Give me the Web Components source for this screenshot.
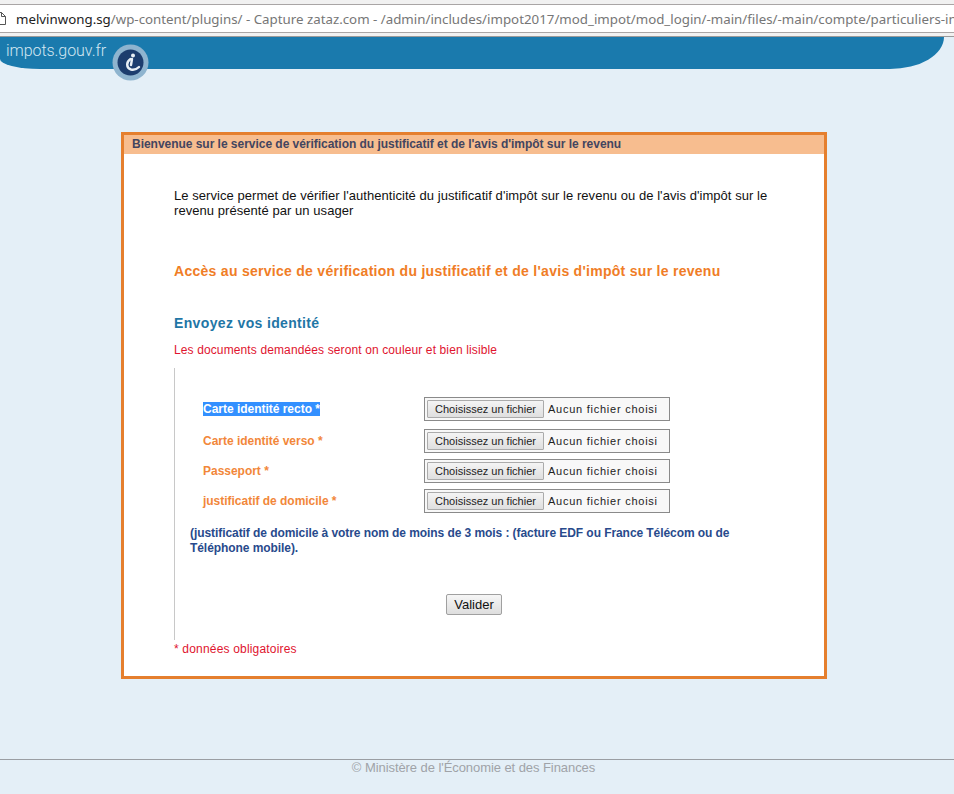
<!DOCTYPE html>
<html lang="fr">
<head>
<meta charset="utf-8">
<title>impots.gouv.fr</title>
<style>
    html, body { margin: 0; padding: 0; height: 794px; overflow: hidden; }
    body { background-color: #e4eff7; font-family: "Liberation Sans", Arial, sans-serif; font-size: 12px; display: flex; flex-direction: column; }
</style>
</head>
<body>
<address-bar></address-bar>
<site-banner></site-banner>
<verify-card title-text="Bienvenue sur le service de vérification du justificatif et de l'avis d'impôt sur le revenu">
    <p slot="lead">Le service permet de vérifier l'authenticité du justificatif d'impôt sur le revenu ou de l'avis d'impôt sur le revenu présenté par un usager</p>
    <file-row selected label="Carte identité recto *"></file-row>
    <file-row label="Carte identité verso *" style="margin-top:8px"></file-row>
    <file-row label="Passeport *" style="margin-top:6px"></file-row>
    <file-row label="justificatif de domicile *" style="margin-top:6px"></file-row>
</verify-card>
<site-footer></site-footer>

<script>
class AddressBar extends HTMLElement {
    constructor() {
        super();
        this.attachShadow({ mode: 'open' });
        this.shadowRoot.innerHTML = `
            <style>
                :host { display: block; height: 37px; background: #f1f1f1; box-sizing: border-box; padding-top: 4px; border-bottom: 1px solid #9a9a9a; flex: none; }
                .field {
                    display: flex; align-items: center; gap: 10px; height: 29px; box-sizing: border-box;
                    background: #fff; border-top: 1px solid #a9a5a5; border-bottom: 1px solid #a9a5a5;
                    font: 13.3px "Noto Sans", sans-serif; color: #767676; white-space: nowrap; overflow: hidden;
                }
                svg { flex: none; margin-left: -1px; }
                b { font-weight: 400; color: #222; }
            </style>
            <div class="field">
                <svg width="7" height="13" viewBox="0 0 7 13"><path d="M-4 .5H2.5L6.5 4.5V12.5H-4M2.5 .5V4.5H6.5" fill="#fff" stroke="#555"/></svg>
                <span><b>melvinwong.sg</b>/wp-content/plugins/ - Capture zataz.com - /admin/includes/impot2017/mod_impot/mod_login/-main/files/-main/compte/particuliers-in</span>
            </div>`;
    }
}

class SiteBanner extends HTMLElement {
    constructor() {
        super();
        this.attachShadow({ mode: 'open' });
        this.shadowRoot.innerHTML = `
            <style>
                :host { display: block; position: relative; height: 32px; width: 944px; flex: none; background: #1a7aad; border-radius: 0 0 54px 40px / 0 0 32px 10px; }
                .name { display: block; padding: 3px 0 0 6px; font: 300 16px/22px Roboto, sans-serif; letter-spacing: -.05px; color: #d3e6f1; }
                .logo { position: absolute; left: 112px; top: 7px; }
            </style>
            <span class="name">impots.gouv.fr</span>
            <svg class="logo" width="37" height="37" viewBox="0 0 37 37">
                <circle cx="18.5" cy="18.5" r="18" fill="#8eb4cf"/>
                <circle cx="18.5" cy="18.5" r="13" fill="#1c3d6e"/>
                <circle cx="21" cy="11.5" r="2" fill="#e8eff5"/>
                <path d="M18.5 15 C14 18 14 24 19 25.5 C22 26.2 25 25 27 23" fill="none" stroke="#e8eff5" stroke-width="2.4" stroke-linecap="round"/>
                <path d="M20 15 L19 21" fill="none" stroke="#e8eff5" stroke-width="2.4" stroke-linecap="round"/>
            </svg>`;
    }
}

class VerifyCard extends HTMLElement {
    constructor() {
        super();
        this.attachShadow({ mode: 'open' });
        const titre = this.getAttribute('title-text');
        this.shadowRoot.innerHTML = `
            <style>
                :host { display: block; box-sizing: border-box; width: 706px; height: 547px; margin: 63px 0 0 121px; border: 3px solid #e57f2e; background: #fff; flex: none; }
                header { height: 19px; background: #f7bd8f; padding-left: 8px; font-weight: bold; line-height: 18px; letter-spacing: -.03px; color: #43455f; }
                .body { padding: 34px 50px 0; }
                ::slotted(p) { margin: 0; font-size: 13px; line-height: 15px; letter-spacing: .055px; color: #111; }
                .lead { width: 600px; }
                h2 { margin: 0; font-size: 14px; line-height: 18px; font-weight: bold; }
                .orange { margin-top: 44px; color: #f07d26; letter-spacing: .28px; }
                .blue { margin-top: 34px; color: #1f76a6; letter-spacing: .35px; }
                .warn { margin: 11px 0 0; line-height: 15px; letter-spacing: .12px; color: #e0142f; }
                .form { margin-top: 10px; height: 272px; box-sizing: border-box; border-left: 1px solid #c8c8c8; padding: 29px 0 0 0; }
                .rows { padding-left: 28px; }
                .note { margin: 13px 0 0 15px; width: 570px; font-weight: bold; line-height: 15px; letter-spacing: -.07px; color: #284a8c; }
                .submit { margin-top: 38px; display: flex; justify-content: center; width: 598px; }
                button { font: 13px "Liberation Sans", Arial, sans-serif; width: 56px; height: 21px; padding: 0; color: #111; border: 1px solid #a0a0a0; border-radius: 2px; background: linear-gradient(#f6f6f6, #dedede); }
                .oblig { margin: 2px 0 0; line-height: 15px; letter-spacing: .18px; color: #e0142f; }
            </style>
            <header>${titre}</header>
            <div class="body">
                <div class="lead"><slot name="lead"></slot></div>
                <h2 class="orange">Accès au service de vérification du justificatif et de l'avis d'impôt sur le revenu</h2>
                <h2 class="blue">Envoyez vos identité</h2>
                <p class="warn">Les documents demandées seront on couleur et bien lisible</p>
                <div class="form">
                    <div class="rows"><slot></slot></div>
                    <p class="note">(justificatif de domicile à votre nom de moins de 3 mois : (facture EDF ou France Télécom ou de Téléphone mobile).</p>
                    <div class="submit"><button type="button">Valider</button></div>
                </div>
                <p class="oblig">* données obligatoires</p>
            </div>`;
    }
}

class FileRow extends HTMLElement {
    constructor() {
        super();
        this.attachShadow({ mode: 'open' });
        const label = this.getAttribute('label');
        const sel = this.hasAttribute('selected');
        this.shadowRoot.innerHTML = `
            <style>
                :host { display: grid; grid-template-columns: 221px 246px; align-items: center; height: 24px; }
                .lbl { font-weight: bold; line-height: 14px; letter-spacing: -.02px; color: #f2873a; justify-self: start; }
                .lbl.sel { background: #3390ff; color: #fff; }
                .box { display: flex; align-items: center; box-sizing: border-box; height: 24px; padding-left: 2px; border: 1px solid #8a8a8a; background: #f8f8f8; }
                button { width: 117px; height: 18px; padding: 0; font: 11px "Liberation Sans", Arial, sans-serif; color: #222; border: 1px solid #ababab; border-radius: 1px; background: linear-gradient(#f4f4f4, #dfdfdf); }
                span.none { margin-left: 4px; font: 11px "Liberation Sans", Arial, sans-serif; letter-spacing: .75px; color: #222; white-space: nowrap; }
            </style>
            <span class="lbl ${sel ? 'sel' : ''}">${label}</span>
            <div class="box"><button type="button">Choisissez un fichier</button><span class="none">Aucun fichier choisi</span></div>`;
    }
}

class SiteFooter extends HTMLElement {
    constructor() {
        super();
        this.attachShadow({ mode: 'open' });
        this.shadowRoot.innerHTML = `
            <style>
                :host { display: block; margin-top: 80px; border-top: 1px solid #9a9ea3; text-align: center; padding-right: 7px; font-size: 13px; line-height: 16px; letter-spacing: -.07px; color: #a0a3a8; flex: none; }
            </style>
            © Ministère de l'Économie et des Finances`;
    }
}

customElements.define('address-bar', AddressBar);
customElements.define('site-banner', SiteBanner);
customElements.define('verify-card', VerifyCard);
customElements.define('file-row', FileRow);
customElements.define('site-footer', SiteFooter);
</script>
</body>
</html>
